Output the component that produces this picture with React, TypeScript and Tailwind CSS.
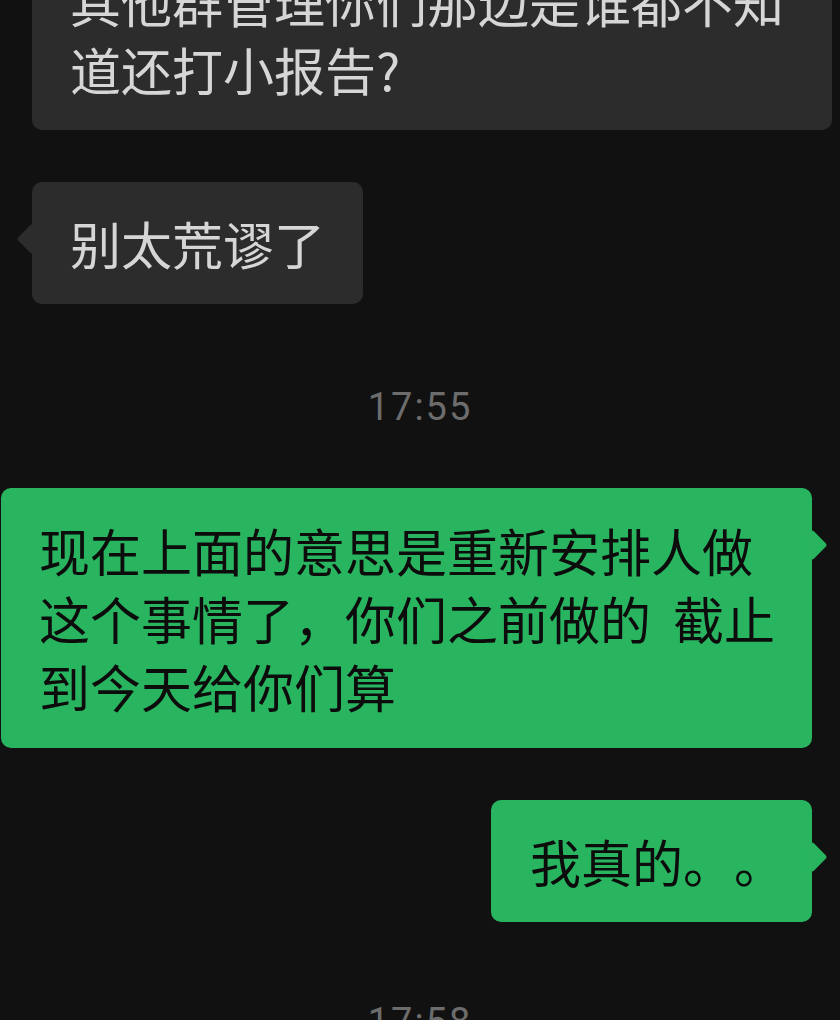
function Tail({ side, color }: { side: "left" | "right"; color: string }) {
  return (
    <span
      className={
        "absolute top-[46px] h-[22px] w-[22px] rotate-45 rounded-[3px] " +
        (side === "left" ? "-left-[11px] " : "-right-[11px] ") +
        color
      }
    />
  );
}

function Stop() {
  return <span className="inline-block w-[51px]">。</span>;
}

export default function App() {
  return (
    <div className="h-[1020px] w-[840px] overflow-hidden bg-[#111111] font-['Noto_Sans_CJK_SC',sans-serif]">
      <div className="flex flex-col">
        {/* incoming, cut off at the top */}
        <div className="relative -mt-[60px] ml-[32px] w-[800px] self-start rounded-[10px] bg-[#2c2c2c] px-[38px] py-[27px] text-[51px] leading-[68px] text-[#d6d6d6]">
          <span className="block whitespace-nowrap">其他群管理你们那边是谁都不知</span>
          <span className="block">道还打小报告?</span>
        </div>

        <div className="relative mt-[52px] ml-[32px] self-start rounded-[10px] bg-[#2c2c2c] px-[38px] py-[27px] text-[51px] leading-[68px] text-[#d6d6d6]">
          <Tail side="left" color="bg-[#2c2c2c]" />
          <span className="relative block">别太荒谬了</span>
        </div>

        <div className="mt-[83px] text-center font-['Roboto',sans-serif] text-[38px] leading-[40px] tracking-[2px] text-[#6c6c6c]">
          17:55
        </div>

        {/* outgoing */}
        <div className="relative mt-[61px] mr-[28px] w-[811px] self-end rounded-[10px] bg-[#29b560] px-[38px] py-[28px] text-[51px] leading-[68px] text-[#0c0c0c]">
          <Tail side="right" color="bg-[#29b560]" />
          <span className="relative block whitespace-nowrap">现在上面的意思是重新安排人做</span>
          <span className="relative block whitespace-nowrap">
            这个事情了，你们之前做的<span className="inline-block w-[22px]" />截止
          </span>
          <span className="relative block whitespace-nowrap">到今天给你们算</span>
        </div>

        <div className="relative mt-[52px] mr-[28px] self-end rounded-[10px] bg-[#29b560] py-[27px] pl-[39px] pr-[27px] text-[51px] leading-[68px] text-[#0c0c0c]">
          <Tail side="right" color="bg-[#29b560]" />
          <span className="relative block whitespace-nowrap">
            我真的
            <Stop />
            <Stop />
          </span>
        </div>

        <div className="mt-[80px] text-center font-['Roboto',sans-serif] text-[38px] leading-[40px] tracking-[2px] text-[#6c6c6c]">
          17:58
        </div>
      </div>
    </div>
  );
}
